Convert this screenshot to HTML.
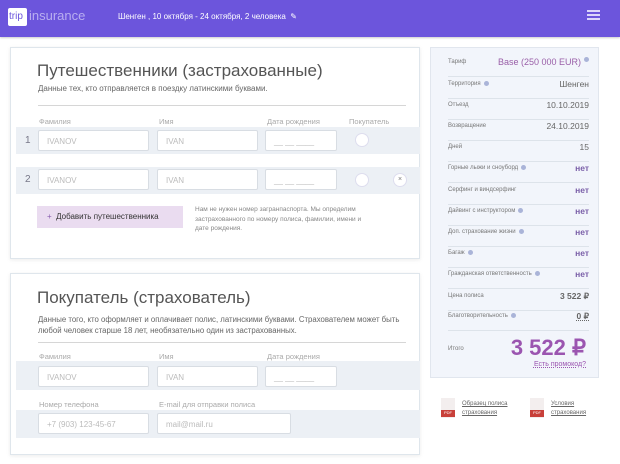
<!DOCTYPE html>
<html><head><meta charset="utf-8"><style>
*{box-sizing:border-box;margin:0;padding:0}
body{width:620px;height:464px;overflow:hidden;background:#fff;font-family:"Liberation Sans","Noto Sans CJK SC",sans-serif;position:relative;color:#333}
.hdr{position:absolute;left:0;top:0;width:620px;height:37px;background:#6c55dc;box-shadow:0 1px 2px rgba(0,0,0,.2)}
.abs{position:absolute}
.card{position:absolute;left:10px;width:410px;background:#fff;border:1px solid #dfe6ec;box-shadow:0 1px 4px rgba(0,0,0,.08)}
.t{position:absolute;font-size:17px;color:#555;white-space:nowrap}
.s{position:absolute;font-size:8px;color:#666;line-height:11px}
.lbl{position:absolute;font-size:7.5px;color:#aaa}
.row{position:absolute;left:16px;width:404px;background:#ecf0f5}
.in{position:absolute;height:21px;background:#fff;border:1px solid #d8dde3;border-radius:2px;font-size:8px;color:#bbb;padding:6px 0 0 8px}
.rad{position:absolute;width:14px;height:14px;border-radius:50%;background:#fff;border:1px solid #dde}
.hr{position:absolute;height:1px;background:#d6d6d6}
.panel{position:absolute;left:430px;top:47px;width:169px;height:331px;background:#f2f5fb;border:1px solid #e1e6ee}
.pr{position:absolute;left:17px;width:141px;font-size:6px;color:#777;border-bottom:1px solid #dde3ea;height:21px;padding-top:3px}
.pr b{position:absolute;right:0;top:1px;font-size:8.5px;color:#666;font-weight:normal}
.pr b.n{color:#7a5fa8;font-weight:bold}
.dot{display:inline-block;width:5px;height:5px;border-radius:50%;background:#aab4d8;margin-left:3px;vertical-align:top}
</style></head><body>
<div class="hdr">
 <div class="abs" style="left:8px;top:8px;width:19px;height:18px;background:#fff;border-radius:2px;color:#6c55dc;font-size:10px;padding:3px 0 0 1px">trip</div>
 <div class="abs" style="left:29px;top:8px;color:#b9aef0;font-size:13px">insurance</div>
 <div class="abs" style="left:118px;top:12px;color:#fff;font-size:8px">Шенген , 10 октября - 24 октября, 2 человека &nbsp;✎</div>
 <div class="abs" style="left:587px;top:10px;width:13px;height:2px;background:#dcd5fa;box-shadow:0 4px 0 #dcd5fa,0 8px 0 #dcd5fa"></div>
</div>

<div class="card" style="top:47px;height:212px">
 <div class="t" style="left:26px;top:13px">Путешественники (застрахованные)</div>
 <div class="s" style="left:27px;top:35px">Данные тех, кто отправляется в поездку латинскими буквами.</div>
 <div class="hr" style="left:27px;top:57px;width:368px"></div>
 <div class="lbl" style="left:28px;top:69px">Фамилия</div><div class="lbl" style="left:148px;top:69px">Имя</div><div class="lbl" style="left:256px;top:69px">Дата рождения</div><div class="lbl" style="left:338px;top:69px">Покупатель</div>
</div>
<div class="row" style="top:127px;height:27px"></div>
<div class="abs" style="left:25px;top:135px;font-size:10px;color:#778">1</div>
<div class="in" style="left:38px;top:130px;width:111px">IVANOV</div><div class="in" style="left:157px;top:130px;width:101px">IVAN</div><div class="in" style="left:265px;top:130px;width:72px">__ __ ____</div>
<div class="rad" style="left:355px;top:133px"></div>
<div class="row" style="top:167px;height:27px"></div>
<div class="abs" style="left:25px;top:174px;font-size:10px;color:#778">2</div>
<div class="in" style="left:38px;top:169px;width:111px">IVANOV</div><div class="in" style="left:157px;top:169px;width:101px">IVAN</div><div class="in" style="left:265px;top:169px;width:72px">__ __ ____</div>
<div class="rad" style="left:355px;top:173px"></div>
<div class="rad" style="left:393px;top:173px;font-size:7px;color:#777;text-align:center;line-height:12px">×</div>
<div class="abs" style="left:37px;top:206px;width:146px;height:22px;background:#eadcf0;font-size:8px;color:#333;padding:6px 0 0 10px"><span style="color:#8a5fb0">+</span> &nbsp;Добавить путешественника</div>
<div class="s" style="left:195px;top:205px;width:180px;font-size:6.5px;line-height:9.5px;color:#888">Нам не нужен номер загранпаспорта. Мы определим застрахованного по номеру полиса, фамилии, имени и дате рождения.</div>

<div class="card" style="top:273px;height:182px">
 <div class="t" style="left:26px;top:14px">Покупатель (страхователь)</div>
 <div class="s" style="left:27px;top:40px;width:370px;font-size:7.8px">Данные того, кто оформляет и оплачивает полис, латинскими буквами. Страхователем может быть любой человек старше 18 лет, необязательно один из застрахованных.</div>
 <div class="hr" style="left:27px;top:68px;width:368px"></div>
 <div class="lbl" style="left:28px;top:78px">Фамилия</div><div class="lbl" style="left:148px;top:78px">Имя</div><div class="lbl" style="left:256px;top:78px">Дата рождения</div>
 <div class="lbl" style="left:28px;top:126px">Номер телефона</div><div class="lbl" style="left:148px;top:126px">E-mail для отправки полиса</div>
</div>
<div class="row" style="top:361px;height:29px"></div>
<div class="in" style="left:38px;top:366px;width:111px">IVANOV</div><div class="in" style="left:157px;top:366px;width:101px">IVAN</div><div class="in" style="left:265px;top:366px;width:72px">__ __ ____</div>
<div class="row" style="top:410px;height:28px"></div>
<div class="in" style="left:38px;top:413px;width:111px">+7 (903) 123-45-67</div><div class="in" style="left:157px;top:413px;width:134px">mail@mail.ru</div>

<div class="panel">
 <div class="pr" style="top:8px">Тариф<b style="color:#9a5fa8;font-size:9px">Base (250 000 EUR)<span class="dot"></span></b></div>
 <div class="pr" style="top:30px">Территория<span class="dot"></span><b>Шенген</b></div>
 <div class="pr" style="top:51px">Отъезд<b>10.10.2019</b></div>
 <div class="pr" style="top:72px">Возвращение<b>24.10.2019</b></div>
 <div class="pr" style="top:93px">Дней<b>15</b></div>
 <div class="pr" style="top:114px">Горные лыжи и сноуборд<span class="dot"></span><b class="n">нет</b></div>
 <div class="pr" style="top:136px">Серфинг и виндсерфинг<b class="n">нет</b></div>
 <div class="pr" style="top:157px">Дайвинг с инструктором<span class="dot"></span><b class="n">нет</b></div>
 <div class="pr" style="top:178px">Доп. страхование жизни<span class="dot"></span><b class="n">нет</b></div>
 <div class="pr" style="top:199px">Багаж<span class="dot"></span><b class="n">нет</b></div>
 <div class="pr" style="top:220px">Гражданская ответственность<span class="dot"></span><b class="n">нет</b></div>
 <div class="pr" style="top:242px">Цена полиса<b style="font-weight:bold">3 522 ₽</b></div>
 <div class="pr" style="top:262px">Благотворительность<span class="dot"></span><b style="font-weight:bold;text-decoration:underline dotted">0 ₽</b></div>
 <div class="abs" style="left:17px;top:298px;font-size:6px;color:#777">Итого</div>
 <div class="abs" style="right:12px;top:287px;font-size:22px;color:#9b55b0;font-weight:bold">3 522 ₽</div>
 <div class="abs" style="right:12px;top:313px;font-size:7px;color:#9b55b0;text-decoration:underline dotted">Есть промокод?</div>
</div>
<div class="abs" style="left:441px;top:398px;width:14px;height:20px;background:#f3eeee"><div class="abs" style="left:0;top:12px;width:14px;height:7px;background:#c8403a;color:#fff;font-size:4px;text-align:center">PDF</div></div>
<div class="abs" style="left:462px;top:400px;font-size:6px;color:#666;text-decoration:underline;line-height:9px">Образец полиса<br>страхования</div>
<div class="abs" style="left:530px;top:398px;width:14px;height:20px;background:#f3eeee"><div class="abs" style="left:0;top:12px;width:14px;height:7px;background:#c8403a;color:#fff;font-size:4px;text-align:center">PDF</div></div>
<div class="abs" style="left:551px;top:400px;font-size:6px;color:#666;text-decoration:underline;line-height:9px">Условия<br>страхования</div>
</body></html>
